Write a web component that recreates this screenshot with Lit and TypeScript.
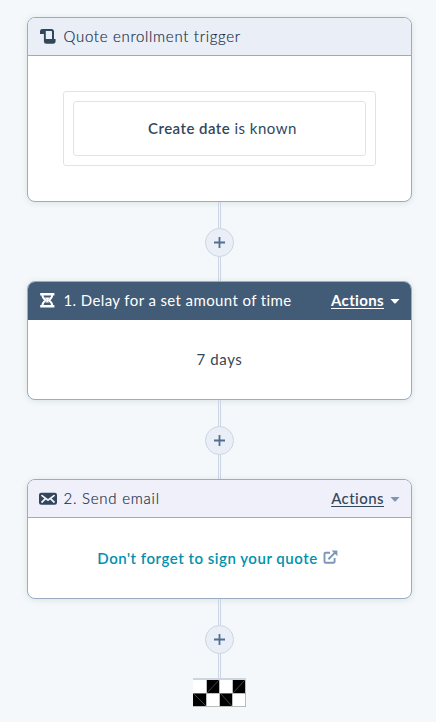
import { LitElement, html, css, svg } from "lit";
import { customElement, property } from "lit/decorators.js";

const icons: Record<string, unknown> = {
  scroll: svg`<svg width="18" height="18" viewBox="0 0 18 18"><path fill="#33475b" fill-rule="evenodd" d="M3.2 1H12.4Q15 1 15 3.6V11H16.6V13Q16.6 15.7 14 15.7H7.2Q4.9 15.7 4.9 13.2V6H1V3.4Q1 1 3.2 1ZM6.8 3V11H13V3.8Q13 3 12.2 3Z"/></svg>`,
  hourglass: svg`<svg width="18" height="18" viewBox="0 0 18 18"><path fill="#fff" d="M1.2 1.1H15.4V3.5H1.2ZM1.2 12.9H15.4V15.5H1.2Z"/><path fill="none" stroke="#fff" stroke-width="1.9" d="M3.4 3C3.4 5.7 5 7 6.8 8.2C5 9.4 3.4 10.8 3.4 13.4M13.2 3C13.2 5.7 11.6 7 9.8 8.2C11.6 9.4 13.2 10.8 13.2 13.4"/><path fill="#fff" d="M5.6 5.6H11L9.1 7.4V9.3L10.4 10.6H6.2L7.5 9.3V7.4Z"/></svg>`,
  mail: svg`<svg width="18" height="18" viewBox="0 0 18 18"><rect y="2.8" width="18" height="12" rx="2.2" fill="#33475b"/><path fill="none" stroke="#f0f0fa" stroke-width="1.8" stroke-linecap="round" d="M3 5.6L9 10.2L15 5.6M3 12L6 9.2M15 12L12 9.2"/></svg>`,
  external: svg`<svg width="15" height="15" viewBox="0 0 15 15"><path fill="none" stroke="#7c98b6" stroke-width="1.9" stroke-linejoin="round" d="M7 2.7H2.6Q1.5 2.7 1.5 3.8V11.7Q1.5 12.8 2.6 12.8H10.5Q11.6 12.8 11.6 11.7V8"/><path fill="none" stroke="#7c98b6" stroke-width="2" d="M5.4 9.2L12.5 2.1"/><path fill="#7c98b6" d="M8.6 .4H14.4V6.2L12.4 4.2L10.6 2.4Z"/></svg>`,
};

@customElement("flow-link")
class FlowLink extends LitElement {
  static styles = css`
    :host { display: flex; justify-content: center; align-items: center; height: 79px; box-sizing: border-box; padding-top: 1px;
      background: linear-gradient(#cbd6e2, #cbd6e2) 191px 0 / 1px 100% no-repeat,
        linear-gradient(#cbd6e2, #cbd6e2) 193px 0 / 1px 100% no-repeat; }
    button { width: 29px; height: 29px; padding: 0; border: 1px solid #cbd6e2; border-radius: 50%; background: #eaeff7; display: grid; place-items: center; }
    svg { display: block; }
  `;
  render() {
    return html`<button aria-label="Add action"><svg width="11" height="11" viewBox="0 0 11 11"><path d="M5.5 0V11M0 5.5H11" stroke="#506e91" stroke-width="1.8"/></svg></button>`;
  }
}

@customElement("flow-card")
class FlowCard extends LitElement {
  @property() heading = "";
  @property() icon = "";
  @property({ reflect: true }) tone = "trigger";
  @property({ type: Boolean }) actions = false;
  static styles = css`
    :host { display: flex; flex-direction: column; box-sizing: border-box; border: 1px solid #99acc2; border-radius: 8px;
      background: #fff; overflow: hidden; box-shadow: 0 1px 6px rgba(45, 62, 80, .12); }
    header { flex: none; display: flex; align-items: center; height: 37px; padding: 0 11px; background: #eaeff7; border-bottom: 1px solid #99acc2; font-size: 15px; }
    .icon { display: flex; width: 18px; margin-right: 6.5px; }
    .title { flex: 1; white-space: nowrap; padding-bottom: 1px; font-weight: 300; color: #14273a; -webkit-text-stroke: .2px #33475b; letter-spacing: var(--track, 0); }
    .actions { display: flex; align-items: center; gap: 6px; }
    .label { padding-bottom: 1px; text-decoration: underline; text-decoration-thickness: 1px; text-underline-offset: 2px; letter-spacing: .45px; font-weight: 500; }
    .caret { width: 10px; height: 5px; margin-top: 1px; background: #7c98b6; clip-path: polygon(0 0, 100% 0, 55% 100%, 45% 100%); }
    .body { flex: 1; display: flex; align-items: center; justify-content: center; }
    :host([tone="delay"]) header { background: #425b76; border-color: #425b76; color: #fff; }
    :host([tone="delay"]) .title { font-weight: 400; color: #fff; -webkit-text-stroke: 0; }
    :host([tone="delay"]) .label { font-weight: 700; letter-spacing: .35px; }
    :host([tone="delay"]) .caret { background: #fff; }
    :host([tone="email"]) header { background: #f0f0fa; }
  `;
  render() {
    return html`<header><span class="icon">${icons[this.icon]}</span><span class="title">${this.heading}</span>
      ${this.actions ? html`<span class="actions"><span class="label">Actions</span><span class="caret"></span></span>` : ""}</header>
      <div class="body"><slot></slot></div>`;
  }
}

@customElement("app-root")
class AppRoot extends LitElement {
  static styles = css`
    :host { display: block; box-sizing: border-box; height: 722px; padding: 17px 24px 0 27px; overflow: hidden; background: #f4f8fa;
      color: #33475b; font: 15px/20px Lato, sans-serif; }
    .trigger { height: 185px; --track: .7px; }
    .delay { height: 119px; --track: .39px; }
    .email { height: 120px; --track: .75px; }
    .group { box-sizing: border-box; width: 313px; height: 75px; padding: 9px; border: 1px solid #dfe3eb; border-radius: 3px; }
    .filter { box-sizing: border-box; height: 55px; padding: 0 0 1px 6px; border: 1px solid #dfe3eb; border-radius: 3px; display: flex; align-items: center; justify-content: center; white-space: pre; letter-spacing: .5px; }
    .strong { font-weight: 600; letter-spacing: .45px; }
    .days { padding-bottom: 1px; letter-spacing: .6px; }
    .mail { display: flex; align-items: center; gap: 5px; padding: 0 4px 1px 0; color: #0091ae; font-weight: 600; white-space: nowrap; }
    .name { letter-spacing: .52px; }
    .finish { display: block; margin: 0 0 0 166px; }
  `;
  render() {
    return html`
      <flow-card class="trigger" tone="trigger" icon="scroll" heading="Quote enrollment trigger">
        <div class="group"><div class="filter"><span class="strong">Create date</span><span> is known</span></div></div>
      </flow-card>
      <flow-link></flow-link>
      <flow-card class="delay" tone="delay" icon="hourglass" heading="1. Delay for a set amount of time" actions><span class="days">7 days</span></flow-card>
      <flow-link></flow-link>
      <flow-card class="email" tone="email" icon="mail" heading="2. Send email" actions>
        <span class="mail"><span class="name">Don't forget to sign your quote</span>${icons.external}</span>
      </flow-card>
      <flow-link></flow-link>
      <svg class="finish" width="53" height="29" viewBox="0 0 53 29">
        <path fill="#cbd6e2" d="M0 0H53V2H0Z"/><path fill="#fff" d="M0 2H53V28H0Z"/>
        <path fill="#000" d="M14 2H26V15H14ZM40 2H52V15H40ZM0 15H13V28H0ZM27 15H39V28H27Z"/>
        <path fill="none" stroke="#555" stroke-width=".8" d="M14 15L26 2M40 15L52 2M0 15L13 28M27 15L39 28"/>
        <path fill="none" stroke="#999" stroke-width="1" d="M52.5 2V28.5M0 28.5H53M0 15.5H53M13.5 2V28M26.5 2V28M39.5 2V28" opacity=".65"/>
      </svg>`;
  }
}
